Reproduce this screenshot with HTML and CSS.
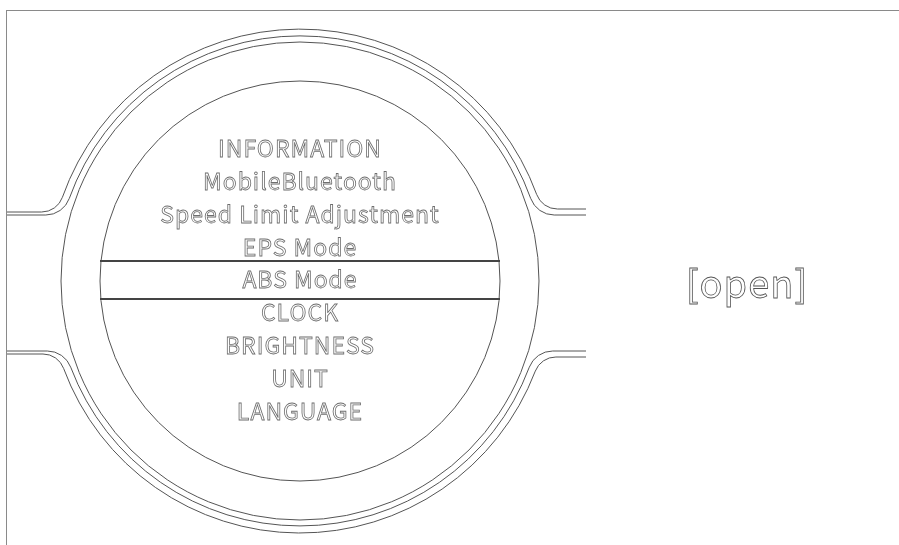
FILE: index.html
```html
<!DOCTYPE html>
<html lang="en">
<head>
    <meta charset="UTF-8">
    <meta name="viewport" content="width=device-width, initial-scale=1.0">
    <title>Dashboard Menu</title>
    <link rel="stylesheet" href="styles.css">
</head>
<body>
    <div class="stage">
        <div class="device">
            <!-- housing outline, drawn in page coordinates -->
            <svg class="device-art" width="588" height="534" viewBox="7 11 588 534">
                <path class="line" d="M6,212 L41.6,212 A22,22 0 0 0 62.4,197.3 A252,252 0 0 1 536.7,194.5 A22,22 0 0 0 557.4,209 L586,209"/>
                <path class="line" d="M6,215 L45.8,215 A25,25 0 0 0 69.3,198.4 A245,245 0 0 1 530.7,198.4 A25,25 0 0 0 554.2,215 L586,215"/>
                <path class="line" d="M6,354 L43,354 A22,22 0 0 1 63.6,368.4 A252,252 0 0 0 535.3,371.1 A22,22 0 0 1 555.9,357 L586,357"/>
                <path class="line" d="M6,351 L47.3,351 A25,25 0 0 1 70.7,367.2 A245,245 0 0 0 529.3,367.2 A25,25 0 0 1 552.7,351 L586,351"/>
                <circle class="line" cx="300" cy="281" r="239"/>
                <circle class="line" cx="300" cy="281" r="200"/>
            </svg>
            <ul class="menu">
                <li>INFORMATION</li>
                <li>MobileBluetooth</li>
                <li>Speed Limit Adjustment</li>
                <li>EPS Mode</li>
                <li class="selected">ABS Mode</li>
                <li>CLOCK</li>
                <li>BRIGHTNESS</li>
                <li>UNIT</li>
                <li>LANGUAGE</li>
            </ul>
        </div>
        <div class="status">[open]</div>
    </div>
</body>
</html>
```
FILE: styles.css
```css
body {
    margin: 0;
    padding: 0;
    background-color: #fff;
    font-family: "Noto Sans CJK SC", "Noto Sans", sans-serif;
    overflow: hidden;
}

.stage {
    display: flex;
    height: 534px;
    margin: 10px 0 0 6px;
    border-top: 1px solid #8a8a8a;
    border-left: 1px solid #8a8a8a;
}

.device {
    position: relative;
    flex: none;
    width: 588px;
}

.device-art {
    position: absolute;
    top: 0;
    left: 0;
}

.device-art .line {
    fill: none;
    stroke: #555;
    stroke-width: 1;
}

.menu {
    position: relative;
    list-style: none;
    margin: 0;
    padding: 120px 2px 0 0;
    display: flex;
    flex-direction: column;
    align-items: center;
    will-change: transform;
}

.menu li {
    font-size: 23px;
    line-height: 33px;
    letter-spacing: 1px;
    color: #fff;
    -webkit-text-stroke: 0.8px #6e6e6e;
}

.menu .selected {
    width: 400px;
    text-align: center;
    border-top: 2px solid #444;
    border-bottom: 2px solid #444;
    margin: -3px 0 -5px;
    padding: 0 0 3px;
}

.status {
    flex: 1;
    display: flex;
    align-items: center;
    justify-content: center;
    padding-top: 6px;
    font-size: 38px;
    letter-spacing: 1px;
    color: #fff;
    -webkit-text-stroke: 0.8px #555;
    will-change: transform;
}
```
